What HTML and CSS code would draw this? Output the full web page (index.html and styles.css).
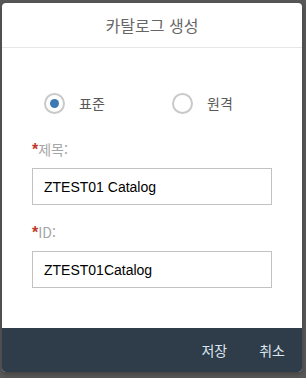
FILE: index.html
```html
<!doctype html>
<html lang="ko">
    <head>
        <meta charset="UTF-8" />
        <title>카탈로그 생성</title>
        <link rel="stylesheet" href="styles.css">
    </head>
    <body>
        <div class="dialog">
            <div class="dialog-header">카탈로그 생성</div>

            <div class="dialog-body">
                <div class="radio-row">
                    <label class="radio">
                        <span class="radio-circle checked"></span>
                        <span class="radio-text">표준</span>
                    </label>
                    <label class="radio">
                        <span class="radio-circle"></span>
                        <span class="radio-text">원격</span>
                    </label>
                </div>

                <div class="form-group">
                    <div class="field-label"><span class="required">*</span>제목:</div>
                    <div class="field-input">ZTEST01 Catalog</div>
                </div>

                <div class="form-group">
                    <div class="field-label"><span class="required">*</span>ID:</div>
                    <div class="field-input">ZTEST01Catalog</div>
                </div>
            </div>

            <div class="dialog-footer">
                <span class="footer-btn">저장</span>
                <span class="footer-btn">취소</span>
            </div>
        </div>
    </body>
</html>
```

FILE: styles.css
```css
:root {
    --overlay-color: #595959;
    --footer-color: #2f3c49;
    --border-color: #c2c2c2;
    --label-color: #a6a6a6;
    --required-color: #c0392b;
    --radio-blue: #3c79b4;
}

body {
    margin: 0;
    padding: 3px 4px 6px 2px;
    background-color: var(--overlay-color);
    font-family: "Noto Sans CJK KR", "Noto Sans", sans-serif;
}

.dialog {
    width: 300px;
    background-color: #ffffff;
    border-radius: 4px;
    overflow: hidden;
    display: flex;
    flex-direction: column;
    box-shadow: 0 2px 6px rgba(0, 0, 0, 0.3);
}

.dialog-header {
    height: 44px;
    border-bottom: 1px solid #e6e6e6;
    display: flex;
    align-items: center;
    justify-content: center;
    font-size: 16px;
    color: #666666;
}

.dialog-body {
    height: 280px;
    box-sizing: border-box;
    padding: 44px 30px 40px 30px;
    display: flex;
    flex-direction: column;
}

.radio-row {
    display: flex;
    padding-left: 12px;
    height: 22px;
    margin-bottom: 26px;
}

.radio {
    display: flex;
    align-items: center;
    gap: 14px;
    flex: 0 0 128px;
}

.radio-circle {
    width: 17px;
    height: 17px;
    border: 2px solid #c9c9c9;
    border-radius: 50%;
    display: flex;
    align-items: center;
    justify-content: center;
}

.radio-circle.checked::after {
    content: "";
    width: 9px;
    height: 9px;
    border-radius: 50%;
    background-color: var(--radio-blue);
}

.radio-text {
    font-size: 14px;
    color: #595959;
}

.form-group {
    display: flex;
    flex-direction: column;
}

.form-group + .form-group {
    margin-top: 18px;
}

.field-label {
    height: 18px;
    line-height: 18px;
    margin-bottom: 10px;
    font-size: 14px;
    color: var(--label-color);
}

.required {
    color: var(--required-color);
    font-weight: 700;
    font-family: "Liberation Sans", sans-serif;
    font-size: 16px;
}

.field-input {
    height: 37px;
    box-sizing: border-box;
    border: 1px solid var(--border-color);
    padding: 0 11px;
    display: flex;
    align-items: center;
    font-family: "Liberation Sans", sans-serif;
    font-size: 14px;
    color: #000000;
}

.dialog-footer {
    height: 44px;
    background-color: var(--footer-color);
    display: flex;
    justify-content: flex-end;
    align-items: center;
    gap: 32px;
    padding-right: 17px;
}

.footer-btn {
    font-size: 14px;
    color: #dde6ef;
}
```
